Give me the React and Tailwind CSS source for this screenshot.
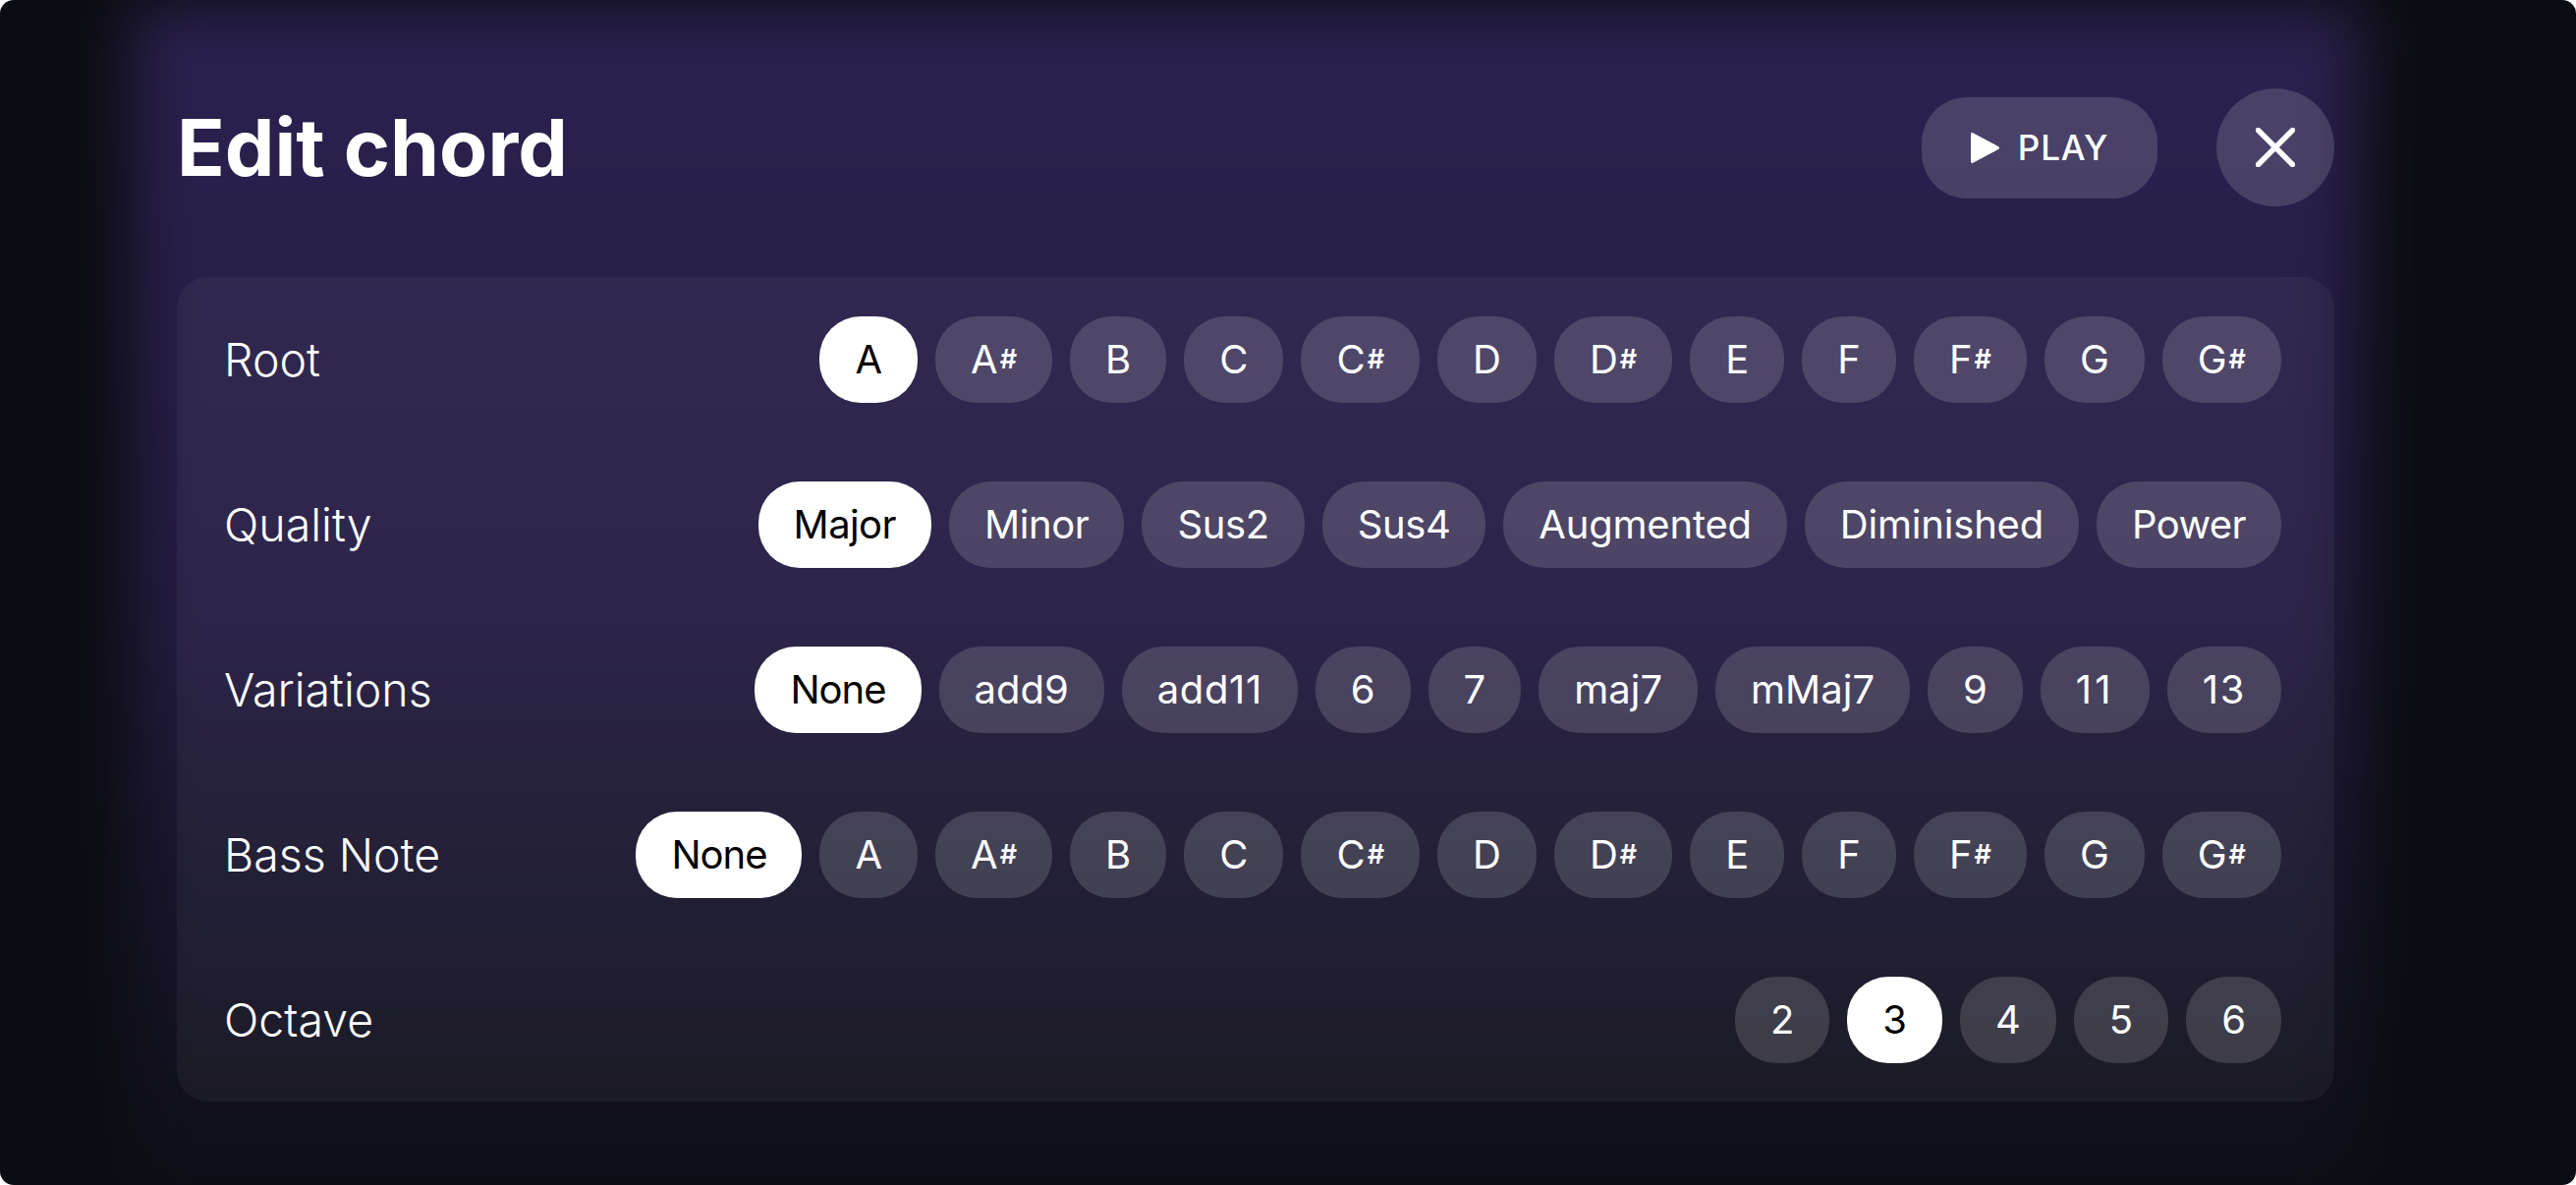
import React from "react";

const font = { fontFamily: "Inter, sans-serif" };

const NOTES = ["A", "A#", "B", "C", "C#", "D", "D#", "E", "F", "F#", "G", "G#"];

const ROWS = [
  { label: "Root", options: NOTES, selected: "A" },
  { label: "Quality", options: ["Major", "Minor", "Sus2", "Sus4", "Augmented", "Diminished", "Power"], selected: "Major" },
  { label: "Variations", options: ["None", "add9", "add11", "6", "7", "maj7", "mMaj7", "9", "11", "13"], selected: "None" },
  { label: "Bass Note", options: ["None", ...NOTES], selected: "None" },
  { label: "Octave", options: ["2", "3", "4", "5", "6"], selected: "3" },
];

// the reference font sets these a touch wider or narrower than Inter
const SPACING = {
  Major: "tracking-[-0.015em]",
  Minor: "tracking-[-0.01em]",
  Sus2: "tracking-[-0.01em]",
  Sus4: "tracking-[-0.01em]",
  Power: "tracking-[-0.015em]",
  Augmented: "tracking-[-0.005em]",
  Diminished: "tracking-[-0.005em]",
  None: "tracking-[-0.025em]",
  add11: "tracking-[0.015em]",
  11: "tracking-[0.08em]",
  13: "tracking-[0.04em]",
};

const Pill = ({ value, active }) => {
  const sharp = value.length === 2 && value[1] === "#";
  return (
    <button
      className={`h-[88px] px-9 rounded-[42px] flex items-center justify-center text-[40px] leading-none ${
        active ? "bg-white text-black" : "bg-white/15 text-white"
      } ${SPACING[value] || ""}`}
    >
      {sharp ? (
        <>
          {value[0]}
          <span className="text-[27px] font-semibold -translate-y-[1px] ml-[2px]">#</span>
        </>
      ) : (
        value
      )}
    </button>
  );
};

export default function App() {
  return (
    <div style={font} className="relative w-[2622px] h-[1206px] bg-white overflow-hidden">
      <div className="relative w-full h-full rounded-[14px] bg-[#0c0d13] overflow-hidden pl-[180px] pr-[246px] pt-[90px]">
        <div className="absolute left-[135px] right-[220px] top-[6px] -bottom-[30px] bg-gradient-to-b from-[#2c2150] via-[#241c42] to-[#0d0e15] blur-[32px]" />

        <div className="relative flex items-center justify-between h-[120px]">
          <h1 className="text-[80.4px] font-bold text-white leading-none">Edit chord</h1>
          <div className="flex items-center gap-[60px]">
            <button className="h-[103px] w-[240px] rounded-[46px] bg-white/15 flex items-center justify-center gap-[19px] text-white text-[35px] font-medium tracking-wide">
              <svg width="29" height="31" viewBox="0 0 29 31" fill="white" stroke="white" strokeWidth="3" strokeLinejoin="round">
                <path d="M1.500 1.500V29.500L27.500 15.500z" />
              </svg>
              PLAY
            </button>
            <button className="w-[120px] h-[120px] rounded-full bg-white/15 flex items-center justify-center">
              <svg width="40" height="40" viewBox="0 0 40 40" stroke="white" strokeWidth="5.500" strokeLinecap="round">
                <path d="M2.500 2.500l35 35M37.500 2.500l-35 35" />
              </svg>
            </button>
          </div>
        </div>

        <div className="relative mt-[72px] h-[839px] rounded-[32px] bg-white/[0.045] pl-[48px] pr-[54px] py-[40px] flex flex-col gap-[80px]">
          {ROWS.map((row) => (
            <div key={row.label} className="flex items-center justify-between h-[88px]">
              <span className="text-[46.5px] font-light text-white leading-none">{row.label}</span>
              <div className="flex gap-[18px]">
                {row.options.map((o) => (
                  <Pill key={o} value={o} active={o === row.selected} />
                ))}
              </div>
            </div>
          ))}
        </div>
      </div>
    </div>
  );
}
